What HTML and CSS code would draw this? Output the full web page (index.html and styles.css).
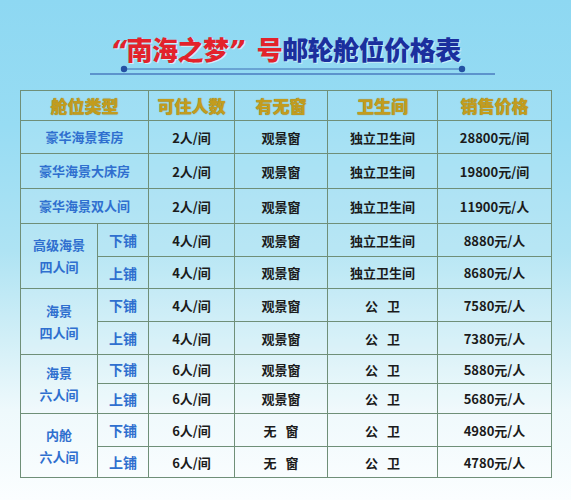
FILE: index.html
```html
<!DOCTYPE html>
<html lang="zh-CN">
<head>
<meta charset="utf-8">
<title>“南海之梦”号邮轮舱位价格表</title>
<link rel="stylesheet" href="styles.css">
</head>
<body>
<div class="page">
  <h1 class="title"><span class="red"><span class="q">“</span>南海之梦<span class="q qr">”</span>号</span><span class="blue">邮轮舱位价格表</span></h1>
  <svg class="rule" width="571" height="14" viewBox="0 0 571 14">
    <line x1="124" y1="5" x2="462" y2="5" stroke="#3f6fb5" stroke-width="1"/>
    <line x1="90" y1="10" x2="495" y2="10" stroke="#4a7bbf" stroke-width="1.6"/>
    <circle cx="124" cy="5" r="3.2" fill="#2451a3"/>
    <circle cx="462" cy="5" r="3.2" fill="#2451a3"/>
  </svg>
  <table class="price">
    <colgroup>
      <col class="c1"><col class="c2"><col class="c3"><col class="c4"><col class="c5"><col class="c6">
    </colgroup>
    <thead>
      <tr class="h"><th colspan="2">舱位类型</th><th>可住人数</th><th>有无窗</th><th>卫生间</th><th>销售价格</th></tr>
    </thead>
    <tbody>
      <tr class="r1"><td colspan="2" class="type">豪华海景套房</td><td>2人/间</td><td>观景窗</td><td>独立卫生间</td><td>28800元/间</td></tr>
      <tr class="r2"><td colspan="2" class="type">豪华海景大床房</td><td>2人/间</td><td>观景窗</td><td>独立卫生间</td><td>19800元/间</td></tr>
      <tr class="r3"><td colspan="2" class="type">豪华海景双人间</td><td>2人/间</td><td>观景窗</td><td>独立卫生间</td><td>11900元/人</td></tr>
      <tr class="r4"><td rowspan="2" class="type">高级海景<br>四人间</td><td class="bunk">下铺</td><td>4人/间</td><td>观景窗</td><td>独立卫生间</td><td>8880元/人</td></tr>
      <tr class="r5"><td class="bunk">上铺</td><td>4人/间</td><td>观景窗</td><td>独立卫生间</td><td>8680元/人</td></tr>
      <tr class="r6"><td rowspan="2" class="type">海景<br>四人间</td><td class="bunk">下铺</td><td>4人/间</td><td>观景窗</td><td class="sp">公 卫</td><td>7580元/人</td></tr>
      <tr class="r7"><td class="bunk">上铺</td><td>4人/间</td><td>观景窗</td><td class="sp">公 卫</td><td>7380元/人</td></tr>
      <tr class="r8"><td rowspan="2" class="type">海景<br>六人间</td><td class="bunk">下铺</td><td>6人/间</td><td>观景窗</td><td class="sp">公 卫</td><td>5880元/人</td></tr>
      <tr class="r9"><td class="bunk">上铺</td><td>6人/间</td><td>观景窗</td><td class="sp">公 卫</td><td>5680元/人</td></tr>
      <tr class="r10"><td rowspan="2" class="type">内舱<br>六人间</td><td class="bunk">下铺</td><td>6人/间</td><td class="sp">无 窗</td><td class="sp">公 卫</td><td>4980元/人</td></tr>
      <tr class="r11"><td class="bunk">上铺</td><td>6人/间</td><td class="sp">无 窗</td><td class="sp">公 卫</td><td>4780元/人</td></tr>
    </tbody>
  </table>
</div>
</body>
</html>
```
FILE: styles.css
```css
html, body {
  margin: 0;
  padding: 0;
}
body {
  width: 571px;
  height: 500px;
  overflow: hidden;
  font-family: "Noto Sans CJK SC", "Noto Sans", sans-serif;
  background: linear-gradient(to bottom, #8ed8f2 0%, #97dcf3 25%, #aee3f3 50%, #d2eff7 68%, #eef9fc 82%, #fbfeff 100%);
}
.page {
  display: flex;
  flex-direction: column;
  padding-top: 33px;
}
.title {
  margin: 0;
  height: 32px;
  line-height: 32px;
  text-align: center;
  font-size: 26px;
  font-weight: 900;
  letter-spacing: -0.5px;
}
.title .q {
  font-family: "DejaVu Sans", sans-serif;
  font-weight: 700;
  font-style: italic;
}
.title .qr {
  margin-right: 12px;
}
.title .red {
  color: #e3222b;
  text-shadow: 1px 1px 0 rgba(255,255,255,0.6);
}
.title .blue {
  color: #1b2f9e;
  text-shadow: 1px 1px 0 rgba(255,255,255,0.5);
}
.rule {
  display: block;
  margin-top: -1px;
}
.price {
  margin: 12px 0 0 20px;
  border-collapse: collapse;
  table-layout: fixed;
  width: 531px;
  border: 1px solid #5f7f6c;
}
.c1 { width: 77px; }
.c2 { width: 51px; }
.c3 { width: 86px; }
.c4 { width: 93px; }
.c5 { width: 110px; }
.c6 { width: 114px; }
.price th, .price td {
  border: 1px solid #6f8f78;
  padding: 0;
  text-align: center;
  vertical-align: middle;
  white-space: pre;
}
.price td {
  font-size: 13px;
  font-weight: 700;
  color: #1b1b1b;
  background: rgba(255,255,255,0.12);
}
.price td.sp {
  word-spacing: 6px;
}
.price th {
  font-size: 17px;
  font-weight: 900;
  color: #c29c1e;
  text-shadow: 0 0 1px #8a7412;
  background: rgba(255,255,255,0.1);
}
.price td.type {
  color: #2f6fcf;
  font-weight: 600;
  font-size: 13px;
  line-height: 22px;
}
.price td.bunk {
  color: #2f6fcf;
  font-weight: 600;
  font-size: 14px;
}
.h { height: 30px; }
.r1 { height: 33px; }
.r2 { height: 35px; }
.r3 { height: 35px; }
.r4 { height: 33px; }
.r5 { height: 32px; }
.r6 { height: 33px; }
.r7 { height: 33px; }
.r8 { height: 29px; }
.r9 { height: 30px; }
.r10 { height: 33px; }
.r11 { height: 31px; }
```
